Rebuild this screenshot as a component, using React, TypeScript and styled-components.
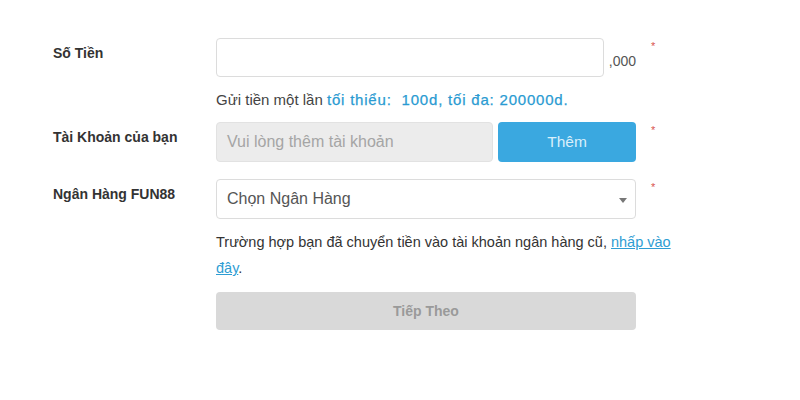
import React from "react";
import styled, { createGlobalStyle } from "styled-components";

const Global = createGlobalStyle`
  html, body { margin: 0; padding: 0; background: #fff; }
  body { font-family: "Liberation Sans", Arial, sans-serif; color: #333; }
`;

const Page = styled.div`
  width: 800px;
  height: 400px;
  box-sizing: border-box;
  padding: 38px 0 0 53px;
  display: flex;
  flex-direction: column;
`;

const Row = styled.div<{ $mt?: number }>`
  display: flex;
  align-items: flex-start;
  margin-top: ${(p) => p.$mt ?? 0}px;
`;

const Label = styled.div`
  width: 163px;
  flex: none;
  padding-top: 7px;
  font-size: 14px;
  font-weight: bold;
  color: #333;
  line-height: 16px;
`;

const Field = styled.div`
  width: 420px;
  flex: none;
  display: flex;
  align-items: center;
  gap: 5px;
`;

const Required = styled.span<{ $top?: number }>`
  margin-left: 15px;
  margin-top: ${(p) => p.$top ?? 2}px;
  color: #d9534f;
  font-size: 11px;
  line-height: 10px;
`;

const TextInput = styled.div`
  width: 389px;
  height: 39px;
  box-sizing: border-box;
  border: 1px solid #dcdcdc;
  border-radius: 4px;
  background: #fff;
`;

const Suffix = styled.span`
  font-size: 14px;
  color: #555;
  margin-top: 6px;
`;

const Help = styled.div`
  margin: 13px 0 0 163px;
  font-size: 15px;
  line-height: 20px;
  color: #444;
`;

const Accent = styled.span`
  color: #2a9bd2;
  letter-spacing: 0.8px;
  -webkit-text-stroke: 0.25px #2a9bd2;
`;

const GrayInput = styled.div`
  flex: 1;
  height: 40px;
  box-sizing: border-box;
  border: 1px solid #e2e2e2;
  border-radius: 4px;
  background: #ececec;
  display: flex;
  align-items: center;
  padding-left: 10px;
  font-size: 16px;
  color: #a5a5a5;
`;

const BlueButton = styled.div`
  width: 138px;
  height: 40px;
  border-radius: 4px;
  background: #3aa8e0;
  color: #d8effb;
  font-size: 15.5px;
  display: flex;
  align-items: center;
  justify-content: center;
`;

const Select = styled.div`
  width: 420px;
  height: 40px;
  box-sizing: border-box;
  border: 1px solid #dcdcdc;
  border-radius: 4px;
  background: #fff;
  display: flex;
  align-items: center;
  justify-content: space-between;
  padding: 0 8px 0 10px;
  font-size: 16px;
  color: #555;
`;

const Caret = styled.span`
  width: 0;
  height: 0;
  border-left: 4px solid transparent;
  border-right: 4px solid transparent;
  border-top: 5px solid #777;
  margin-top: 2px;
`;

const Note = styled.p`
  margin: 10px 0 0 163px;
  width: 456px;
  font-size: 14.5px;
  line-height: 26px;
  color: #333;
`;

const Link = styled.a`
  color: #2e9dd3;
  text-decoration: underline;
`;

const NextButton = styled.div`
  margin: 11px 0 0 163px;
  width: 420px;
  height: 38px;
  border-radius: 4px;
  background: #d9d9d9;
  color: #9a9a9a;
  font-size: 14px;
  font-weight: bold;
  display: flex;
  align-items: center;
  justify-content: center;
`;

export default function App() {
  return (
    <>
      <Global />
      <Page>
        <Row>
          <Label>Số Tiền</Label>
          <Field>
            <TextInput />
            <Suffix>,000</Suffix>
          </Field>
          <Required $top={3}>*</Required>
        </Row>
        <Help>
          Gửi tiền một lần <Accent>tối thiểu:&nbsp; 100d, tối đa: 200000d.</Accent>
        </Help>
        <Row $mt={12}>
          <Label>Tài Khoản của bạn</Label>
          <Field>
            <GrayInput>Vui lòng thêm tài khoản</GrayInput>
            <BlueButton>Thêm</BlueButton>
          </Field>
          <Required $top={3}>*</Required>
        </Row>
        <Row $mt={17}>
          <Label>Ngân Hàng FUN88</Label>
          <Field>
            <Select>
              Chọn Ngân Hàng
              <Caret />
            </Select>
          </Field>
          <Required $top={3}>*</Required>
        </Row>
        <Note>
          Trường hợp bạn đã chuyển tiền vào tài khoản ngân hàng cũ, <Link>nhấp vào</Link>{" "}
          <Link>đây</Link>.
        </Note>
        <NextButton>Tiếp Theo</NextButton>
      </Page>
    </>
  );
}
